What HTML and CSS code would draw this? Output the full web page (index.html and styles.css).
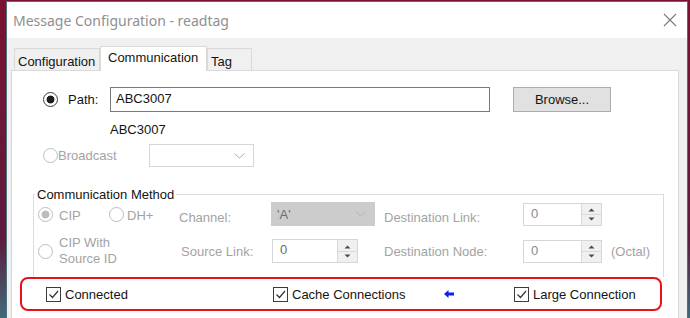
FILE: index.html
```html
<!DOCTYPE html>
<html>
<head>
    <title>Message Configuration - readtag</title>
    <link rel="stylesheet" href="styles.css">
</head>
<body>
    <div class="window">
        <div class="titlebar">
            <span class="title">Message Configuration - readtag</span>
            <svg class="close" width="14" height="14" viewBox="0 0 14 14"><path d="M1 1L13 13M13 1L1 13" stroke="#7a7a7a" stroke-width="1.1"/></svg>
        </div>
        <div class="client">
            <div class="tabs">
                <div class="tab tab-config">Configuration</div>
                <div class="tab tab-comm active">Communication</div>
                <div class="tab tab-tag">Tag</div>
            </div>
            <div class="panel">
                <div class="path-row">
                    <span class="radio checked"></span>
                    <span class="path-label">Path:</span>
                    <div class="textbox">ABC3007</div>
                    <button class="browse">Browse...</button>
                </div>
                <div class="path-value">ABC3007</div>
                <div class="broadcast-row">
                    <span class="radio disabled"></span>
                    <span class="dim broadcast-label">Broadcast</span>
                    <div class="combo">
                        <svg width="11" height="6" viewBox="0 0 11 6"><path d="M0.5 0.5L5.5 5L10.5 0.5" fill="none" stroke="#a8a8a8"/></svg>
                    </div>
                </div>

                <fieldset class="method">
                    <legend>Communication Method</legend>
                    <div class="method-grid">
                        <div class="opts">
                            <div class="opt opt-cip">
                                <span class="radio disabled checked"></span>
                                <span class="dim opt-text">CIP</span>
                            </div>
                            <div class="opt">
                                <span class="radio disabled"></span>
                                <span class="dim opt-text dh">DH+</span>
                            </div>
                        </div>
                        <span class="dim low">Channel:</span>
                        <div class="combo combo-off">
                            <span>'A'</span>
                            <svg width="11" height="6" viewBox="0 0 11 6"><path d="M0.5 0.5L5.5 5L10.5 0.5" fill="none" stroke="#b4b4b4"/></svg>
                        </div>
                        <span class="dim low">Destination Link:</span>
                        <div class="spin">
                            <span class="spin-val">0</span>
                            <span class="spin-btns">
                                <svg width="19" height="21" viewBox="0 0 19 21"><path d="M0 10.5H19" stroke="#dadada"/><path d="M6.5 7.5L9.5 4.5L12.5 7.5Z" fill="#4a4a4a"/><path d="M6.5 13.5L9.5 16.5L12.5 13.5Z" fill="#4a4a4a"/></svg>
                            </span>
                        </div>
                        <span></span>

                        <div class="opt">
                            <span class="radio disabled"></span>
                            <span class="dim opt-text two-line">CIP With<br>Source ID</span>
                        </div>
                        <span class="dim source-label">Source Link:</span>
                        <div class="spin spin-small">
                            <span class="spin-val dark">0</span>
                            <span class="spin-btns">
                                <svg width="19" height="21" viewBox="0 0 19 21"><path d="M0 10.5H19" stroke="#dadada"/><path d="M6.5 7.5L9.5 4.5L12.5 7.5Z" fill="#4a4a4a"/><path d="M6.5 13.5L9.5 16.5L12.5 13.5Z" fill="#4a4a4a"/></svg>
                            </span>
                        </div>
                        <span class="dim">Destination Node:</span>
                        <div class="spin">
                            <span class="spin-val">0</span>
                            <span class="spin-btns">
                                <svg width="19" height="21" viewBox="0 0 19 21"><path d="M0 10.5H19" stroke="#dadada"/><path d="M6.5 7.5L9.5 4.5L12.5 7.5Z" fill="#4a4a4a"/><path d="M6.5 13.5L9.5 16.5L12.5 13.5Z" fill="#4a4a4a"/></svg>
                            </span>
                        </div>
                        <span class="dim">(Octal)</span>
                    </div>
                </fieldset>

                <div class="highlight">
                    <div class="check check-connected">
                        <span class="box"><svg width="13" height="13" viewBox="0 0 13 13"><path d="M2.5 6.5L5.5 9.5L11 3" fill="none" stroke="#333" stroke-width="1.2"/></svg></span>
                        <span>Connected</span>
                    </div>
                    <div class="check check-cache">
                        <span class="box"><svg width="13" height="13" viewBox="0 0 13 13"><path d="M2.5 6.5L5.5 9.5L11 3" fill="none" stroke="#333" stroke-width="1.2"/></svg></span>
                        <span>Cache Connections</span>
                    </div>
                    <svg class="arrow" width="10" height="8" viewBox="0 0 10 8"><path d="M0 4L4.5 0V2.6H10V5.4H4.5V8Z" fill="#1020f0"/></svg>
                    <div class="check">
                        <span class="box"><svg width="13" height="13" viewBox="0 0 13 13"><path d="M2.5 6.5L5.5 9.5L11 3" fill="none" stroke="#333" stroke-width="1.2"/></svg></span>
                        <span>Large Connection</span>
                    </div>
                </div>
            </div>
        </div>
    </div>
</body>
</html>
```

FILE: styles.css
```css
body {
    margin: 0;
    height: 318px;
    overflow: hidden;
    background: linear-gradient(#7a1232, #5c1a3c 75%, #3f6a7a);
    font-family: "Liberation Sans", Arial, sans-serif;
    font-size: 13px;
    color: #141414;
}
.window {
    margin: 1px 0 0 6px;
    width: 680px;
    height: 317px;
    overflow: hidden;
    border: 1px solid #50707a;
    border-bottom: none;
    background: #f0f0f0;
}
.titlebar {
    height: 36px;
    background: #fff;
    display: flex;
    align-items: center;
    justify-content: space-between;
    padding: 0 10px 0 6px;
}
.title {
    font-family: "Noto Sans", sans-serif;
    font-size: 14px;
    color: #8f8f8f;
}
.client {
    padding: 8px 0 0 4px;
}
.tabs {
    display: flex;
    align-items: flex-end;
    height: 24px;
    margin-left: 3px;
}
.tab {
    height: 22px;
    box-sizing: border-box;
    border: 1px solid #d9d9d9;
    border-bottom: none;
    line-height: 15px;
    padding-top: 5px;
    background: #f0f0f0;
}
.tab-config {
    width: 86px;
    padding-left: 3px;
}
.tab-comm {
    width: 107px;
    padding-left: 7px;
}
.tab-tag {
    width: 45px;
    padding-left: 3px;
}
.tab.active {
    height: 25px;
    margin-bottom: -1px;
    padding-top: 3px;
    background: #fff;
    position: relative;
    z-index: 1;
}
.panel {
    width: 668px;
    height: 248px;
    box-sizing: border-box;
    background: #fff;
    border: 1px solid #d9d9d9;
    border-bottom: none;
}
.dim {
    color: #a3a3a3;
}
.radio {
    flex: none;
    width: 15px;
    height: 15px;
    box-sizing: border-box;
    border-radius: 50%;
    border: 1px solid #3c3c3c;
    background: #fff;
}
.radio.checked {
    background: radial-gradient(circle, #1e1e1e 0 3.6px, #fff 4.3px);
}
.radio.disabled {
    border-color: #bdbdbd;
}
.radio.disabled.checked {
    background: radial-gradient(circle, #bdbdbd 0 3.6px, #fff 4.3px);
}
.path-row {
    display: flex;
    align-items: center;
    height: 25px;
    margin-top: 16px;
    padding-left: 31px;
}
.path-label {
    width: 42px;
    margin-left: 10px;
}
.textbox {
    width: 380px;
    height: 25px;
    box-sizing: border-box;
    border: 1px solid #7a7a7a;
    padding-left: 5px;
    line-height: 22px;
}
.browse {
    margin-left: 23px;
    width: 98px;
    height: 25px;
    background: #e1e1e1;
    border: 1px solid #adadad;
    font-family: inherit;
    font-size: 13px;
    color: #141414;
    padding: 0;
}
.path-value {
    margin-top: 8px;
    padding-left: 98px;
    line-height: 20px;
}
.broadcast-row {
    display: flex;
    align-items: center;
    height: 23px;
    margin-top: 4px;
    padding-left: 31px;
}
.broadcast-label {
    width: 91px;
}
.combo {
    width: 105px;
    height: 23px;
    box-sizing: border-box;
    border: 1px solid #d6d6d6;
    display: flex;
    align-items: center;
    justify-content: flex-end;
    padding-right: 8px;
}
.combo-off {
    width: 104px;
    height: 24px;
    background: #cccccc;
    border-color: #cccccc;
    justify-content: space-between;
    padding-left: 5px;
    color: #6e6e6e;
}
.method {
    margin: 20px 0 0 21px;
    width: 631px;
    box-sizing: border-box;
    border: 1px solid #dcdcdc;
    border-bottom: none;
    padding: 0 0 10px 0;
    min-width: 0;
}
.method legend {
    margin-left: 1px;
    padding: 0 2px;
    line-height: 15px;
}
.method-grid {
    display: grid;
    grid-template-columns: 141px 92px 113px 139px 88px auto;
    grid-template-rows: 24px 32px;
    row-gap: 9px;
    align-items: center;
    padding-left: 4px;
}
.opts {
    display: flex;
    align-items: center;
}
.opt {
    display: flex;
    align-items: center;
}
.opt-cip {
    width: 71px;
}
.opt-text {
    margin-left: 6px;
    margin-top: 3px;
}
.opt-text.dh {
    margin-left: 3px;
}
.two-line {
    line-height: 16px;
    margin-top: 0;
}
.low {
    margin-top: 6px;
}
.source-label {
    padding-left: 2px;
}
.spin {
    width: 79px;
    height: 23px;
    box-sizing: border-box;
    border: 1px solid #d6d6d6;
    display: flex;
}
.spin-small {
    width: 86px;
    height: 24px;
    margin-left: 1px;
}
.spin-val {
    flex: 1;
    padding-left: 7px;
    line-height: 19px;
    color: #8a8a8a;
}
.spin-val.dark {
    color: #6a6a6a;
}
.spin-btns {
    width: 19px;
    border-left: 1px solid #dadada;
    background: #f0f0f0;
    display: flex;
    align-items: center;
}
.highlight {
    margin-left: 8px;
    width: 642px;
    height: 34px;
    box-sizing: border-box;
    border: 2px solid #e5121c;
    border-radius: 8px;
    display: flex;
    align-items: center;
    padding-left: 24px;
}
.check {
    display: flex;
    align-items: center;
}
.check-connected {
    width: 227px;
}
.check-cache {
    width: 171px;
}
.box {
    width: 15px;
    height: 15px;
    box-sizing: border-box;
    border: 1px solid #3c3c3c;
    margin-right: 4px;
    display: flex;
    align-items: center;
    justify-content: center;
}
.arrow {
    margin-right: 60px;
}
```
